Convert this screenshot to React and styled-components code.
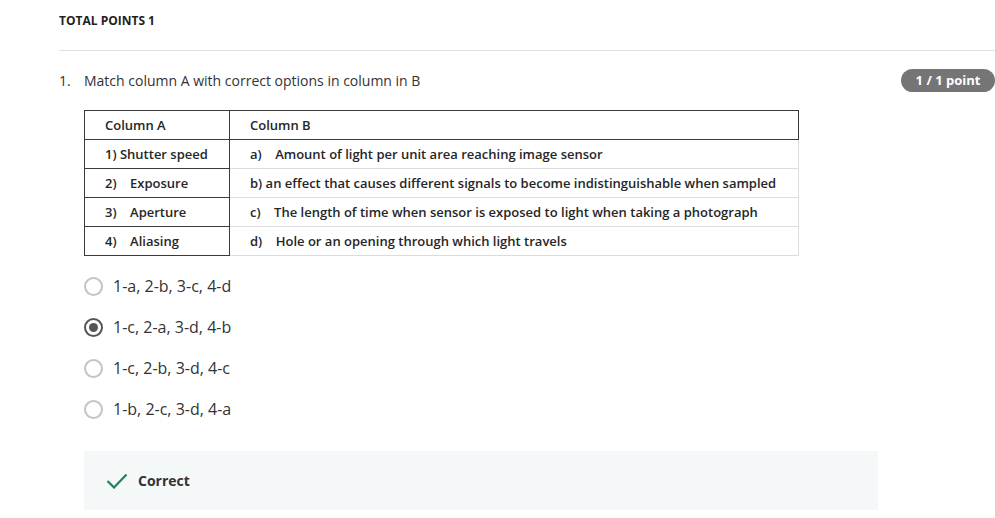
import styled, { createGlobalStyle } from "styled-components";

const GlobalStyle = createGlobalStyle`
  body {
    margin: 0;
    background: #fff;
    font-family: "Open Sans", "Liberation Sans", sans-serif;
    color: #333;
  }
`;

const Page = styled.div`
  padding: 12px 0 0 59px;
`;

const TotalPoints = styled.div`
  height: 18px;
  line-height: 18px;
  font-size: 12px;
  font-weight: 700;
  color: #1f1f1f;
  margin-bottom: 20px;
`;

const Divider = styled.hr`
  margin: 0;
  border: 0;
  border-top: 1px solid #e1e1e1;
`;

const QuestionRow = styled.div`
  display: flex;
  align-items: center;
  height: 24px;
  margin-top: 17px;
  font-size: 14px;
  color: #333;
`;

const Number = styled.span`
  width: 25px;
`;

const QuestionText = styled.span`
  flex: 1;
`;

const Badge = styled.span`
  width: 94px;
  height: 23px;
  line-height: 23px;
  text-align: center;
  border-radius: 12px;
  background: #757575;
  color: #fff;
  font-size: 13px;
  font-weight: 700;
`;

const Body = styled.div`
  padding-left: 25px;
`;

const Table = styled.table`
  margin-top: 18px;
  width: 715px;
  border-collapse: collapse;
  font-size: 13px;
  font-weight: 600;
  color: #262626;
`;

const Cell = styled.td`
  height: 28px;
  padding: 0 0 0 20px;
  border: 1px solid ${(p) => (p.$dark ? "#3a3a3a" : "#dcdcdc")};
  width: ${(p) => (p.$first ? "124px" : "auto")};
  white-space: pre;
`;

const Options = styled.div`
  margin-top: 18px;
  display: flex;
  flex-direction: column;
  gap: 17px;
`;

const Option = styled.label`
  display: flex;
  align-items: center;
  height: 24px;
  font-size: 16px;
  color: #333;
`;

const Radio = styled.span`
  box-sizing: border-box;
  width: 19px;
  height: 19px;
  border-radius: 50%;
  border: 2px solid ${(p) => (p.$checked ? "#555" : "#c4c4c4")};
  margin-right: 10px;
  display: flex;
  align-items: center;
  justify-content: center;
  &::after {
    content: "";
    display: ${(p) => (p.$checked ? "block" : "none")};
    width: 9px;
    height: 9px;
    border-radius: 50%;
    background: #555;
  }
`;

const Feedback = styled.div`
  margin-top: 30px;
  width: 794px;
  height: 59px;
  box-sizing: border-box;
  padding-left: 22px;
  background: #f5f8f8;
  display: flex;
  align-items: center;
  gap: 10px;
  font-size: 14px;
  font-weight: 700;
  color: #333;
`;

const rows = [
  ["1) Shutter speed", "a)    Amount of light per unit area reaching image sensor"],
  ["2)    Exposure", "b) an effect that causes different signals to become indistinguishable when sampled"],
  ["3)    Aperture", "c)    The length of time when sensor is exposed to light when taking a photograph"],
  ["4)    Aliasing", "d)    Hole or an opening through which light travels"],
];

const options = ["1-a, 2-b, 3-c, 4-d", "1-c, 2-a, 3-d, 4-b", "1-c, 2-b, 3-d, 4-c", "1-b, 2-c, 3-d, 4-a"];

export default function App() {
  return (
    <Page>
      <GlobalStyle />
      <TotalPoints>TOTAL POINTS 1</TotalPoints>
      <Divider />
      <QuestionRow>
        <Number>1.</Number>
        <QuestionText>Match column A with correct options in column in B</QuestionText>
        <Badge>1 / 1 point</Badge>
      </QuestionRow>
      <Body>
        <Table>
          <tbody>
            <tr>
              <Cell $dark $first>Column A</Cell>
              <Cell $dark>Column B</Cell>
            </tr>
            {rows.map(([a, b]) => (
              <tr key={a}>
                <Cell $dark $first>{a}</Cell>
                <Cell>{b}</Cell>
              </tr>
            ))}
          </tbody>
        </Table>
        <Options>
          {options.map((o, i) => (
            <Option key={o}>
              <Radio $checked={i === 1} />
              {o}
            </Option>
          ))}
        </Options>
        <Feedback>
          <svg width="22" height="16" viewBox="0 0 22 16">
            <polyline points="1.5,8 8,14.5 20.5,1.5" fill="none" stroke="#1f8354" strokeWidth="2.2" />
          </svg>
          Correct
        </Feedback>
      </Body>
    </Page>
  );
}
